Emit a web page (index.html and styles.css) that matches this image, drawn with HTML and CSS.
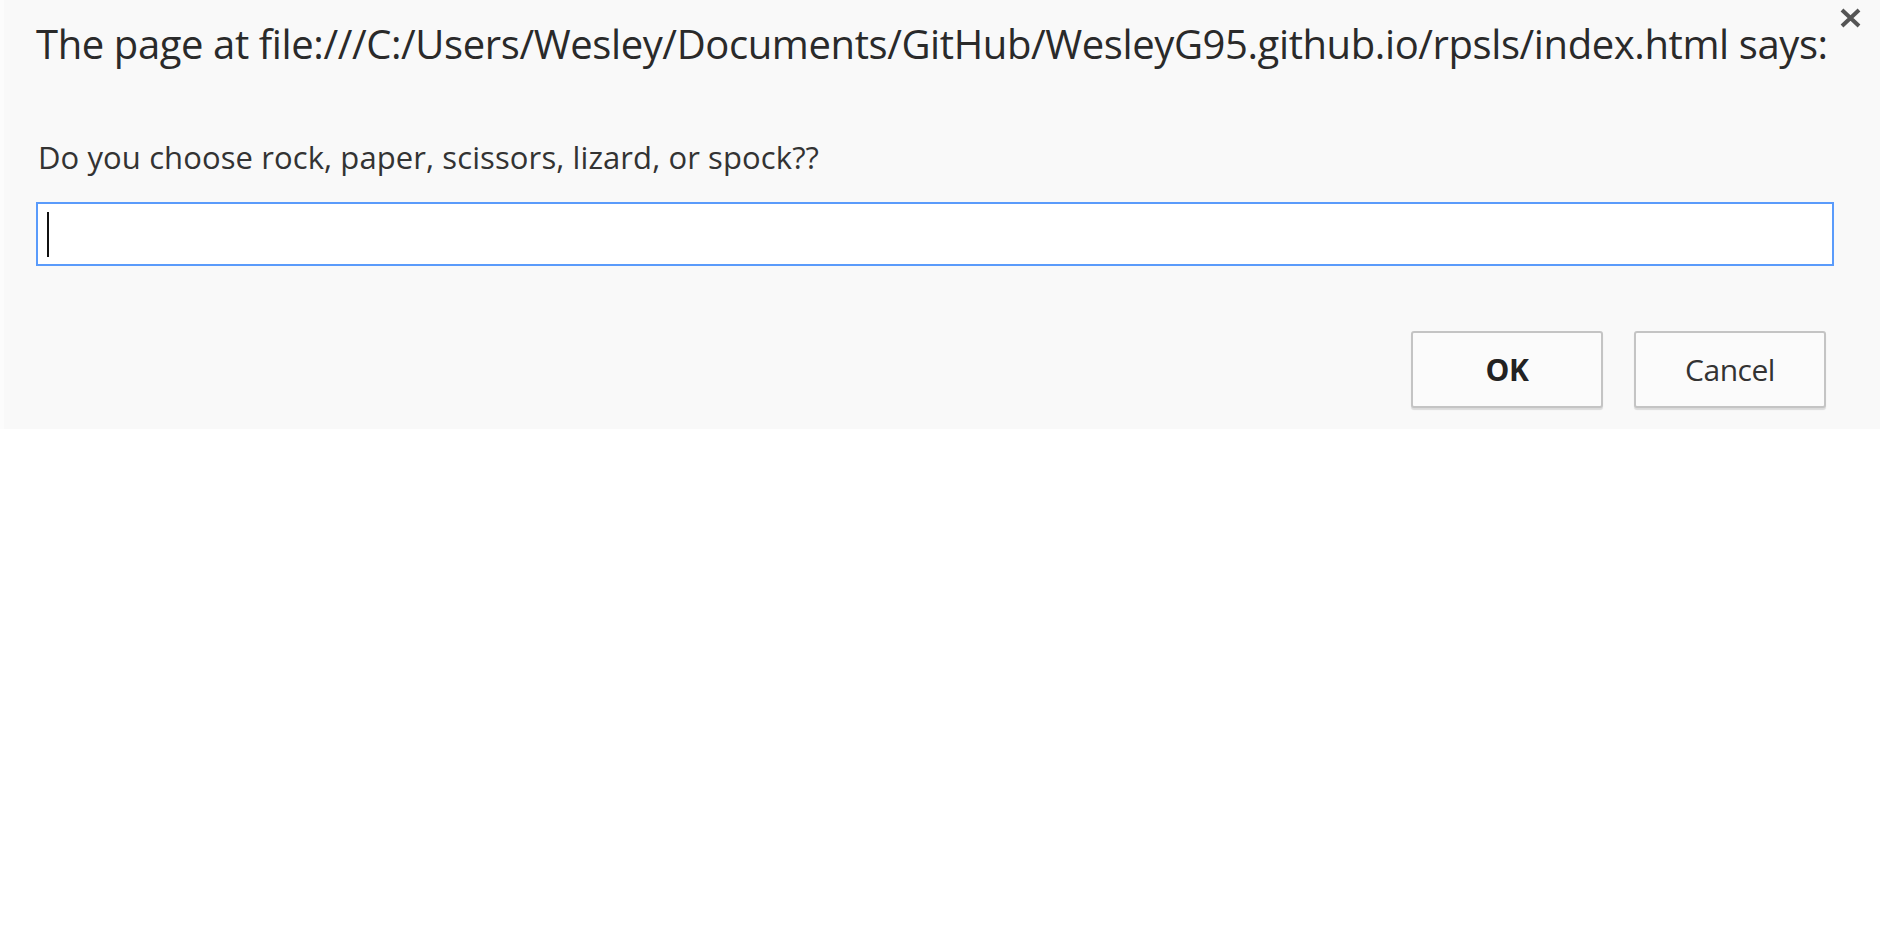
FILE: index.html
```html
<!DOCTYPE html>
<html>
<head>
<meta charset="utf-8">
<title>Prompt</title>
<link rel="stylesheet" href="styles.css">
</head>
<body>
<div class="dialog">
  <div class="title-row">
    <div class="title">The page at file:///C:/Users/Wesley/Documents/GitHub/WesleyG95.github.io/rpsls/index.html says:</div>
    <button class="close" aria-label="Close">
      <svg width="25" height="20" viewBox="0 0 25 20"><path d="M4 2 L21 18 M21 2 L4 18" stroke="#555" stroke-width="4" fill="none"/></svg>
    </button>
  </div>
  <div class="message">Do you choose rock, paper, scissors, lizard, or spock??</div>
  <div class="input-box"><span class="caret"></span></div>
  <div class="buttons">
    <button class="btn btn-ok">OK</button>
    <button class="btn">Cancel</button>
  </div>
</div>
</body>
</html>
```

FILE: styles.css
```css
html, body {
  margin: 0;
  padding: 0;
  background: #ffffff;
}

body {
  font-family: "Open Sans", "Noto Sans", sans-serif;
  color: #222;
}

.dialog {
  background: #f9f9f9;
  border-left: 4px solid #fcfcfc;
  height: 429px;
  box-sizing: border-box;
  padding: 19px 46px 21px 32px;
  display: flex;
  flex-direction: column;
}

.title-row {
  display: flex;
  align-items: flex-start;
  justify-content: space-between;
  margin-right: -46px;
}

.title {
  font-size: 40px;
  line-height: 50px;
  letter-spacing: -0.4px;
  color: #2a2a2a;
  white-space: nowrap;
}

.close {
  border: none;
  background: none;
  padding: 0;
  margin: -11px 17px 0 0;
  width: 25px;
  height: 20px;
  display: flex;
}

.message {
  margin-top: 69px;
  font-size: 31px;
  line-height: 38px;
  letter-spacing: 0.1px;
  color: #333;
  padding-left: 2px;
}

.input-box {
  margin-top: 26px;
  height: 64px;
  box-sizing: border-box;
  border: 2px solid #5a9bfb;
  background: #fff;
  display: flex;
  align-items: center;
  padding-left: 9px;
}

.caret {
  width: 2px;
  height: 45px;
  background: #111;
}

.buttons {
  margin-top: 65px;
  display: flex;
  justify-content: flex-end;
  gap: 31px;
  margin-right: 8px;
}

.btn {
  width: 192px;
  height: 77px;
  box-sizing: border-box;
  border: 2px solid #c4c4c4;
  border-radius: 3px;
  background: #fbfbfb;
  box-shadow: 0 2px 1px rgba(0,0,0,0.12);
  font-family: "Open Sans", "Noto Sans", sans-serif;
  font-size: 30px;
  color: #333;
  letter-spacing: -0.5px;
  padding: 0;
}

.btn-ok {
  font-weight: 700;
  color: #222;
}
```
